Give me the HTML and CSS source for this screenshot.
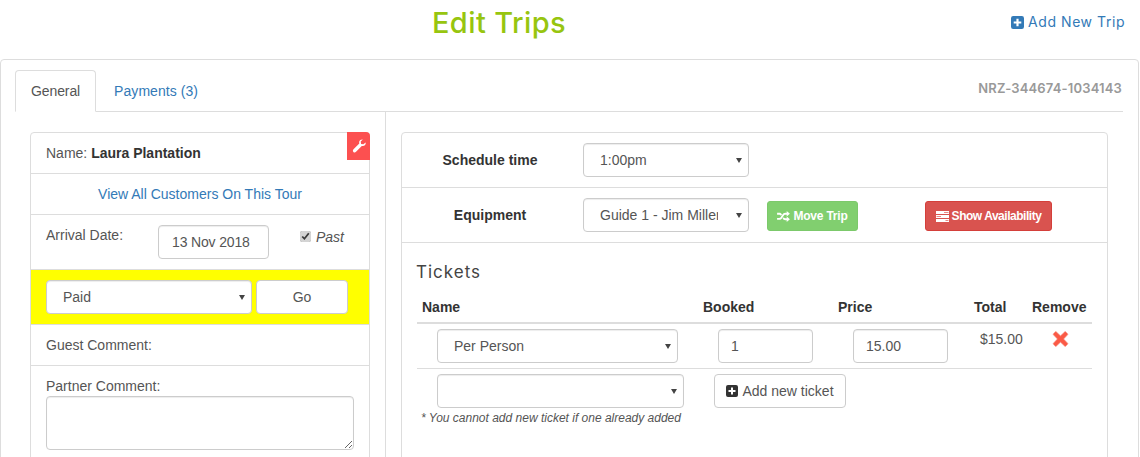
FILE: index.html
```html
<!DOCTYPE html>
<html lang="en">
<head>
<meta charset="utf-8">
<title>Edit Trips</title>
<link rel="stylesheet" href="styles.css">
</head>
<body>
<header class="page-head">
  <h1 class="title">Edit Trips</h1>
  <a class="add-trip" href="#"><svg class="ic-plus" viewBox="0 0 12 12"><path fill-rule="evenodd" d="M2 0h8a2 2 0 0 1 2 2v8a2 2 0 0 1-2 2H2a2 2 0 0 1-2-2V2a2 2 0 0 1 2-2zM5 2.500V5H2.500v2H5v2.500h2V7h2.500V5H7V2.500z"/></svg> Add New Trip</a>
</header>
<main class="panel">
  <nav class="tabs">
    <a class="tab active" href="#">General</a>
    <a class="tab" href="#">Payments (3)</a>
    <span class="ref">NRZ-344674-1034143</span>
  </nav>
  <div class="columns">
    <section class="left">
      <div class="card">
        <a class="wrench" href="#"><svg viewBox="0 0 14 14"><path d="M13.600 3.400c.2.700.1 1.700-.5 2.500-.8 1-2.100 1.400-3.300 1L4 12.800c-.8.800-1.900.8-2.600.1-.7-.7-.7-1.800.1-2.600L7.300 4.400c-.4-1.200 0-2.500 1-3.300C9.100.5 10 .3 10.800.5L8.700 2.600l.4 2.300 2.300.4z"/></svg></a>
        <div class="row">Name: <strong>Laura Plantation</strong></div>
        <div class="row center"><a href="#">View All Customers On This Tour</a></div>
        <div class="row arrival">
          <span class="arrival-label">Arrival Date:</span>
          <input class="field date" type="text" value="13 Nov 2018">
          <label class="past"><input type="checkbox" checked> <em>Past</em></label>
        </div>
        <div class="row status">
          <div class="select s-status"><select><option>Paid</option></select></div>
          <button class="btn go" type="button">Go</button>
        </div>
        <div class="row">Guest Comment:</div>
        <div class="row partner">
          <label for="pc">Partner Comment:</label>
          <textarea id="pc"></textarea>
        </div>
      </div>
    </section>
    <section class="right">
      <div class="card">
        <div class="row form-row">
          <span class="form-label">Schedule time</span>
          <div class="select s-form"><select><option>1:00pm</option></select></div>
        </div>
        <div class="row form-row">
          <span class="form-label">Equipment</span>
          <div class="select s-form"><select><option>Guide 1 - Jim Miller</option></select></div>
          <button class="btn-sm green" type="button"><svg class="ic-shuffle" viewBox="0 0 14 12"><path d="M10.500 0l3.500 3-3.500 3V4H9c-.8 0-1.300.5-1.900 1.400L5.700 7.500C4.900 8.700 4 9.600 2.500 9.600H0V7.600h2.500c.7 0 1.100-.4 1.700-1.300l1.400-2.100C6.400 3 7.500 2 9 2h1.500zM0 2h2.500c1.300 0 2.200.7 2.900 1.600L4.200 5.300C3.600 4.500 3.200 4 2.500 4H0zM10.500 6l3.500 3-3.500 3v-2H9c-1.300 0-2.300-.7-3-1.600l1.200-1.700C7.800 7.500 8.300 8 9 8h1.500z"/></svg> Move Trip</button>
          <button class="btn-sm red" type="button"><svg class="ic-avail" viewBox="0 0 13 11"><path d="M0 0h13v3H0zM0 4h13v3H0zM0 8h13v3H0z"/><path class="avail-mark" d="M8 1h4.500v1H8zM.5 5H5v1H.5zM9.500 9H12.500v1H9.500z"/></svg> Show Availability</button>
        </div>
        <div class="tickets">
          <h2>Tickets</h2>
          <div class="t-row t-head">
            <span>Name</span><span>Booked</span><span>Price</span><span>Total</span><span>Remove</span>
          </div>
          <div class="t-row t-body">
            <div class="cell"><div class="select s-ticket"><select><option>Per Person</option></select></div></div>
            <div class="cell"><input class="field qty" type="text" value="1"></div>
            <div class="cell"><input class="field qty" type="text" value="15.00"></div>
            <div class="total">$15.00</div>
            <div class="remove"><svg viewBox="0 0 16 16"><path d="M3.800.8 8 4.800 12.200.8c.4-.3.800-.3 1.100 0l1.900 1.900c.3.300.3.800 0 1.100L11.200 8l4 4.200c.3.300.3.800 0 1.100l-1.900 1.900c-.3.300-.7.300-1.100 0L8 11.200l-4.200 4c-.4.300-.8.300-1.100 0L.8 13.300c-.3-.3-.3-.8 0-1.100L4.800 8 .8 3.800c-.3-.3-.3-.8 0-1.100L2.700.8c.3-.3.700-.3 1.100 0z"/></svg></div>
          </div>
          <div class="add-row">
            <div class="select s-add"><select><option></option></select></div>
            <button class="btn add" type="button"><svg class="ic-plus" viewBox="0 0 12 12"><path fill-rule="evenodd" d="M2 0h8a2 2 0 0 1 2 2v8a2 2 0 0 1-2 2H2a2 2 0 0 1-2-2V2a2 2 0 0 1 2-2zM5 2.500V5H2.500v2H5v2.500h2V7h2.500V5H7V2.500z"/></svg> Add new ticket</button>
          </div>
          <p class="note">* You cannot add new ticket if one already added</p>
        </div>
      </div>
    </section>
  </div>
</main>
</body>
</html>
```

FILE: styles.css
```css
* { box-sizing: border-box; }
html, body { margin: 0; height: 457px; overflow: hidden; }
body { background: #fff; color: #555; font: 14px/20px "Liberation Sans", Arial, sans-serif; }
a { color: #337ab7; text-decoration: none; }

.page-head { display: grid; grid-template-columns: 998px 1fr; height: 59px; align-items: start; }
.title { margin: 0; padding-top: 5px; text-align: center; color: #97c50f; font: 500 29px/36px Inter, "Noto Sans", sans-serif; letter-spacing: .4px; }
.add-trip { justify-self: end; margin: 12px 15px 0 0; font: 14px/20px Inter, "Open Sans", sans-serif; letter-spacing: .55px; display: flex; align-items: center; gap: 4px; }
.ic-plus { width: 12px; height: 12px; fill: currentColor; flex: none; }
.add-trip .ic-plus { width: 13px; height: 13px; }

.panel { width: 1139px; height: 500px; padding: 10px 15px 0 14px; border: 1px solid #ddd; border-radius: 4px; }
.tabs { display: flex; align-items: flex-end; height: 42px; width: 1108px; border-bottom: 1px solid #ddd; position: relative; }
.tab { padding: 10px 15px; margin: 0 2px -1px 0; height: 42px; line-height: 20px; border: 1px solid transparent; border-radius: 4px 4px 0 0; letter-spacing: .05px; }
.tab.active { color: #555; background: #fff; border-color: #ddd #ddd #fff; letter-spacing: -.1px; }
.ref { margin: 0 1px 14px auto; color: #999; font: 600 13px/18px Inter, "Open Sans", sans-serif; letter-spacing: .17px; }

.columns { display: flex; }
.left { width: 371px; padding: 20px 15px 0; border-right: 1px solid #ddd; height: 400px; }
.right { width: 737px; padding: 20px 15px 0; }
.card { position: relative; border: 1px solid #ddd; border-radius: 4px; height: 400px; }
.row { padding: 10px 15px; border-bottom: 1px solid #ddd; }
.row strong { color: #333; }
.center { text-align: center; }

.wrench { position: absolute; top: -1px; right: -1px; width: 23px; height: 28px; background: #fc5050; border-radius: 0 4px 0 0; display: flex; align-items: center; justify-content: center; }
.wrench svg { width: 14px; height: 14px; fill: #fff; }

.field, .select select, textarea, .btn { height: 34px; border: 1px solid #ccc; border-radius: 4px; background: #fff; color: #555; font: 14px/20px "Liberation Sans", Arial, sans-serif; }
.field, .select select, textarea { box-shadow: inset 0 1px 1px rgba(0,0,0,.075); }
.field { padding: 6px 12px; }
.select { position: relative; }
.select select { appearance: none; display: block; width: 100%; padding: 6px 30px 6px 12px; }
.select::after { content: ""; position: absolute; right: 7px; top: 15px; border: 3.500px solid transparent; border-top: 5px solid #444; border-bottom: 0; pointer-events: none; }
.btn { padding: 6px 12px; text-align: center; }

.arrival { display: flex; align-items: flex-start; height: 55px; }
.arrival-label { width: 112px; }
.date { width: 111px; padding-left: 13px; padding-right: 8px; letter-spacing: -.15px; }
.past { margin: 2px 0 0 31px; display: flex; align-items: center; gap: 5px; }
.past input { margin: 0 0 2px; width: 11px; height: 11px; accent-color: #d4d4d4; }
.past em { font-style: italic; }

.status { display: flex; gap: 4px; background: #ff0; height: 55px; }
.s-status { width: 206px; }
.s-status select { padding-left: 16px; }
.go { width: 92px; }

.partner { border-bottom: 0; }
.partner label { display: block; }
textarea { display: block; width: 308px; height: 54px; padding: 6px 12px; }

.form-row { display: flex; align-items: center; height: 55px; padding: 0; }
.form-label { width: 176px; margin-right: 5px; text-align: center; color: #333; font-weight: 700; }
.s-form { width: 166px; }
.s-form select { padding-left: 16px; }
.btn-sm { height: 30px; margin-top: 2px; border-radius: 3px; border: 1px solid; color: #fff; font: 700 12px/18px "Liberation Sans", Arial, sans-serif; padding: 0; display: flex; align-items: center; justify-content: center; gap: 3px; white-space: nowrap; }
.btn-sm svg { fill: #fff; flex: none; }
.green { width: 91px; margin-left: 18px; background: #81cf6f; border-color: #7cc96b; letter-spacing: -.2px; }
.red { width: 127px; margin-left: 67px; background: #d9534f; border-color: #d43f3a; letter-spacing: -.47px; }
.ic-shuffle { width: 13px; height: 11px; }
.ic-avail { width: 13px; height: 11px; }
.btn-sm .avail-mark { fill: #e88a87; }

.tickets { padding: 0 15px; }
.tickets h2 { margin: 0 0 0 -1px; padding-top: 18px; color: #444; font: 400 17px/22px Inter, "Open Sans", sans-serif; letter-spacing: 1px; }
.t-row { display: grid; grid-template-columns: 281px 135px 136px 58px 65px; width: 675px; }
.t-head { padding: 0 5px; margin-top: 14px; height: 27px; border-bottom: 2px solid #ddd; color: #333; font-weight: 700; grid-template-columns: 281px 135px 136px 58px 60px; }
.t-body { border-bottom: 1px solid #ddd; height: 45px; padding-top: 5px; }
.cell { padding-left: 20px; }
.s-ticket { width: 241px; }
.s-ticket select { padding-left: 16px; }
.qty { width: 95px; }
.total { padding-left: 11px; height: 20px; }
.remove { padding-left: 25px; padding-top: 2px; }
.remove svg { display: block; width: 17px; height: 16px; fill: #fb5a46; stroke: #f5a79c; stroke-width: .6; }
.add-row { display: flex; gap: 30px; padding: 5px 0 0 20px; }
.s-add { width: 247px; }
.add { width: 132px; padding: 0; display: flex; align-items: center; justify-content: center; gap: 4px; white-space: nowrap; }
.add .ic-plus { color: #333; }
.note { margin: 2px 0 0 4px; font: italic 12px/17px "Liberation Sans", Arial, sans-serif; color: #555; }
```
